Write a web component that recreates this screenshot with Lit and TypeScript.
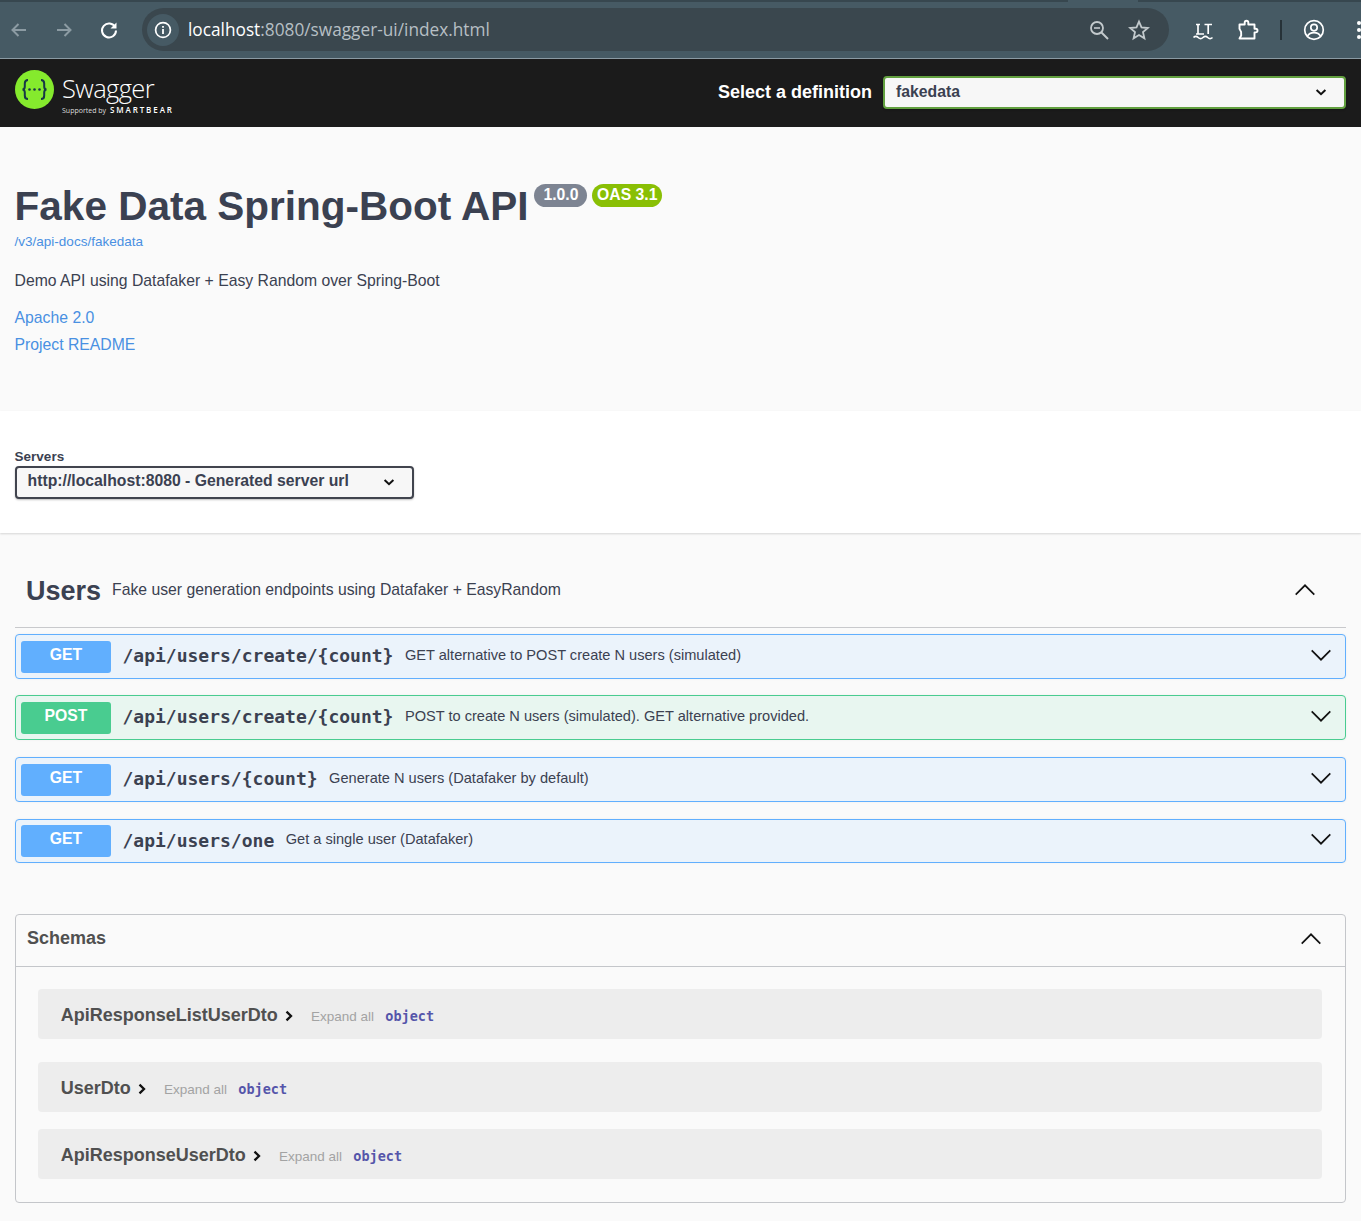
import { LitElement, html, css, svg } from 'lit';
import { customElement } from 'lit/decorators.js';

const operations = [
  { method: 'GET', path: '/api/users/create/{count}', summary: 'GET alternative to POST create N users (simulated)' },
  { method: 'POST', path: '/api/users/create/{count}', summary: 'POST to create N users (simulated). GET alternative provided.' },
  { method: 'GET', path: '/api/users/{count}', summary: 'Generate N users (Datafaker by default)' },
  { method: 'GET', path: '/api/users/one', summary: 'Get a single user (Datafaker)' },
];

const schemas = ['ApiResponseListUserDto', 'UserDto', 'ApiResponseUserDto'];

const chevron = (up = false) => html`
  <svg class="chevron" width="20" height="20" viewBox="0 0 20 20">
    <path d=${up ? 'M0.7 14.6L10 5.3l9.3 9.3' : 'M0.7 5.4L10 14.7l9.3-9.3'} fill="none" stroke="#111" stroke-width="1.7"></path>
  </svg>`;

const smallChevron = html`
  <svg width="14" height="14" viewBox="0 0 14 14">
    <path d="M2.6 5l4.4 4.2L11.4 5" fill="none" stroke="#111" stroke-width="2"></path>
  </svg>`;

const toolIcon = (body: unknown) => html`
  <span class="tool"><svg width="24" height="24" viewBox="0 0 24 24">${body}</svg></span>`;

@customElement('app-root')
export class AppRoot extends LitElement {
  static styles = css`
    :host {
      display: block;
      min-height: 1221px;
      background: #fafafa;
      font-family: 'Liberation Sans', Arial, sans-serif;
      color: #3b4151;
      overflow: hidden;
    }

    /* Browser chrome */
    .tabstrip {
      height: 2px;
      background: #37474f;
      padding-left: 1068px;
    }
    .tabstrip span {
      display: block;
      width: 70px;
      height: 2px;
      background: #465a64;
    }
    .toolbar {
      display: flex;
      align-items: center;
      height: 56px;
      box-sizing: content-box;
      padding-left: 1px;
      background: #465a64;
      border-bottom: 1px solid #8a9aa3;
      gap: 9px;
      overflow: hidden;
    }
    .tool {
      flex: 0 0 36px;
      display: flex;
      align-items: center;
      justify-content: center;
      height: 36px;
      margin-top: -1px;
    }
    .omnibox {
      flex: 0 0 1027px;
      height: 43px;
      margin: -1px 7px 0 6px;
      border-radius: 22px;
      background: #3a474e;
      display: flex;
      align-items: center;
      padding: 0 10px 0 5px;
      box-sizing: border-box;
    }
    .site-info {
      width: 32px;
      height: 32px;
      border-radius: 50%;
      background: #465a64;
      display: flex;
      align-items: center;
      justify-content: center;
    }
    .url {
      margin-left: 9px;
      flex: 1;
      font-family: 'Open Sans', 'Noto Sans', sans-serif;
      font-size: 17.25px;
      color: #b6bfc4;
    }
    .url b {
      font-weight: 400;
      color: #fff;
    }
    .omni-tool {
      width: 40px;
      display: flex;
      justify-content: center;
    }
    .separator {
      flex: 0 0 2px;
      height: 20px;
      background: #263238;
      margin: 0 5px;
    }

    /* Swagger top bar */
    .topbar {
      height: 68px;
      background: #1b1b1b;
      display: flex;
      align-items: center;
      padding: 0 15px;
    }
    .logo {
      display: flex;
      align-items: center;
      gap: 8px;
    }
    .logo svg {
      margin-top: -8px;
    }
    .wordmark {
      color: #fff;
      display: flex;
      flex-direction: column;
      margin-top: 3px;
    }
    .wordmark .name {
      font-family: 'Open Sans', sans-serif;
      font-weight: 300;
      font-size: 25.5px;
      line-height: 28px;
      letter-spacing: -0.6px;
    }
    .wordmark .by {
      font-family: 'Open Sans', sans-serif;
      font-size: 7px;
      line-height: 10px;
      margin-top: 3px;
      color: #ddd;
      white-space: nowrap;
    }
    .wordmark .by span {
      font-size: 8px;
      font-weight: 600;
      letter-spacing: 1.9px;
      color: #fff;
      margin-left: 2px;
    }
    .definition {
      margin-left: auto;
      margin-top: -2px;
      display: flex;
      align-items: center;
      gap: 11px;
      color: #fff;
      font-weight: 700;
      font-size: 18px;
    }
    .select {
      display: flex;
      align-items: center;
      justify-content: space-between;
      box-sizing: border-box;
      background: #f7f7f7;
      border-radius: 4px;
      font-weight: 700;
      color: #3b4151;
      font-size: 15.75px;
      box-shadow: 0 1px 2px 0 rgba(0, 0, 0, 0.25);
      padding: 0 16px 0 11px;
    }
    .select.def {
      width: 463px;
      height: 33px;
      border: 2px solid #62a03f;
    }
    .select.server {
      width: 399px;
      height: 33px;
      border: 2px solid #41444e;
      padding: 0 16px 0 11px;
    }
    .select span {
      margin-top: -3px;
    }
    .select.def span {
      margin-top: -1px;
    }
    .select svg {
      margin-top: -1px;
    }

    /* Info */
    .info {
      height: 284px;
      box-sizing: border-box;
      padding: 55px 15px 0 14.6px;
    }
    .title {
      display: flex;
      align-items: flex-start;
    }
    h1 {
      margin: 0;
      font-size: 40.5px;
      line-height: 49px;
      font-weight: 700;
      color: #3b4151;
    }
    .badge {
      margin-top: 2px;
      margin-left: 5px;
      height: 23px;
      border-radius: 12px;
      padding: 0 4.6px;
      box-sizing: border-box;
      background: #7d8492;
      color: #fff;
      font-weight: 700;
      font-size: 15.75px;
      line-height: 22px;
    }
    .badge.version {
      margin-left: 6px;
      padding: 0 9px;
    }
    .badge.oas {
      background: #89bf04;
    }
    a {
      color: #4990e2;
      text-decoration: none;
      display: block;
    }
    .spec-url {
      font-size: 13.5px;
      line-height: 16px;
      margin-top: 3px;
    }
    .desc {
      font-size: 15.75px;
      line-height: 20px;
      margin-top: 21px;
    }
    .links {
      margin-top: 13px;
      font-size: 15.75px;
      line-height: 27px;
    }

    /* Servers */
    .schemes {
      height: 122px;
      box-sizing: border-box;
      padding: 38px 15px 0 14.6px;
      background: #fff;
      box-shadow: 0 1px 2px 0 rgba(0, 0, 0, 0.15);
    }
    .schemes label {
      display: block;
      font-weight: 700;
      font-size: 13.5px;
      line-height: 16px;
      margin-bottom: 1px;
    }

    /* Operations */
    .section {
      padding: 0 15px;
    }
    .tag {
      display: flex;
      align-items: center;
      height: 95px;
      box-sizing: border-box;
      border-bottom: 1px solid #c8c9cc;
      padding: 22px 31px 0 11px;
    }
    .tag h3 {
      margin: 0;
      font-size: 27px;
      font-weight: 700;
      line-height: 32px;
    }
    .tag p {
      margin: -2px 0 0 11px;
      flex: 1;
      font-size: 15.75px;
    }
    .tag .chevron {
      margin-top: -3px;
    }
    .ops {
      margin-top: 6px;
    }
    .op {
      display: flex;
      align-items: center;
      height: 45px;
      box-sizing: border-box;
      margin-bottom: 17px;
      padding: 0 14px 0 5px;
      border: 1px solid #61affe;
      border-radius: 4px;
      background: #ebf3fb;
      box-shadow: 0 0 3px rgba(0, 0, 0, 0.05);
    }
    .op:first-child {
      margin-bottom: 16px;
    }
    .op:last-child {
      height: 44px;
      margin-bottom: 0;
    }
    .op.post {
      border-color: #49cc90;
      background: #e8f6f0;
    }
    .op .chevron {
      margin-top: -4px;
    }
    .method {
      flex: 0 0 90px;
      height: 32px;
      border-radius: 3px;
      background: #61affe;
      color: #fff;
      font-weight: 700;
      font-size: 15.75px;
      line-height: 28px;
      text-align: center;
    }
    .post .method {
      background: #49cc90;
    }
    .path {
      margin: -2px 0 0 11.5px;
      font-family: 'DejaVu Sans Mono', monospace;
      font-weight: 700;
      font-size: 18px;
    }
    .summary {
      margin: -4px 0 0 11.5px;
      flex: 1;
      font-size: 14.6px;
    }

    /* Schemas */
    .models {
      margin: 51px 15px 0;
      height: 289px;
      box-sizing: border-box;
      border: 1px solid #c4c6ca;
      border-radius: 4px;
    }
    .models header {
      height: 52px;
      box-sizing: border-box;
      display: flex;
      align-items: center;
      justify-content: space-between;
      padding: 0 24px 4px 11px;
      border-bottom: 1px solid #c4c6ca;
      font-size: 18px;
      font-weight: 700;
      color: #505050;
    }
    .model-list {
      padding: 22px 23px 0 22px;
    }
    .model {
      display: flex;
      align-items: center;
      height: 50px;
      box-sizing: border-box;
      padding: 4px 0 0 22.7px;
      margin-bottom: 17px;
      border-radius: 4px;
      background: #ededed;
    }
    .model:first-child {
      margin-bottom: 23px;
    }
    .model .name {
      font-size: 18px;
      font-weight: 700;
      color: #505050;
      margin-top: -2px;
    }
    .model svg {
      margin-left: 4px;
    }
    .expand {
      margin-left: 15.2px;
      font-size: 13.5px;
      color: #a3a3a3;
    }
    .type {
      margin: -1px 0 0 11.4px;
      font-family: 'DejaVu Sans Mono', monospace;
      font-weight: 700;
      font-size: 13.5px;
      color: #5555aa;
    }
  `;

  render() {
    return html`
      <div class="tabstrip"><span></span></div>
      <div class="toolbar">
        ${toolIcon(svg`<path d="M19 12H6M11.5 6L5.5 12l6 6" fill="none" stroke="#8c9ba3" stroke-width="2"/>`)}
        ${toolIcon(svg`<path d="M5 12h13M12.5 6l6 6-6 6" fill="none" stroke="#8c9ba3" stroke-width="2"/>`)}
        ${toolIcon(svg`<path d="M18.2 9.2A7 7 0 1 0 19 12.5" fill="none" stroke="#fff" stroke-width="2"/><path d="M19.5 4.5v6h-6z" fill="#fff"/>`)}
        <div class="omnibox">
          <span class="site-info">
            <svg width="20" height="20" viewBox="0 0 20 20">
              <circle cx="10" cy="10" r="7.4" fill="none" stroke="#fff" stroke-width="1.7"></circle>
              <path d="M10 9v5M10 6v1.7" stroke="#fff" stroke-width="1.8"></path>
            </svg>
          </span>
          <span class="url"><b>localhost</b>:8080/swagger-ui/index.html</span>
          <span class="omni-tool">
            <svg width="24" height="24" viewBox="0 0 24 24">
              <circle cx="10" cy="10" r="6" fill="none" stroke="#c3cacd" stroke-width="1.8"></circle>
              <path d="M14.5 14.5L21 21" stroke="#c3cacd" stroke-width="2"></path>
              <path d="M7 10h6" stroke="#c3cacd" stroke-width="1.6"></path>
            </svg>
          </span>
          <span class="omni-tool">
            <svg width="24" height="24" viewBox="0 0 24 24">
              <path d="M12 3.6l2.5 5.8 6.3.6-4.8 4.1 1.4 6.2-5.4-3.3-5.4 3.3 1.4-6.2L3.2 10l6.3-.6z" fill="none" stroke="#c3cacd" stroke-width="1.8"></path>
            </svg>
          </span>
        </div>
        ${toolIcon(svg`
          <path d="M5 6.5h4M7 6.5V16M5 16h8M13.5 6.5H21M17.2 6.5V16" fill="none" stroke="#fff" stroke-width="1.7"/>
          <path d="M2.5 19.5c1.6-1.6 3.1-1.6 4.7 0s3.1 1.6 4.8 0 3.1-1.6 4.7 0 3.1 1.6 4.8 0" fill="none" stroke="#fff" stroke-width="1.7"/>`)}
        ${toolIcon(svg`<path d="M3.5 6.5h5.2V4.6a1.8 1.8 0 0 1 3.6 0v1.9h6.2v4.3h1.2a1.8 1.8 0 0 1 0 3.6h-1.2v6.1H3.5l1.7-3-.1-3.6-1.6-3z" fill="none" stroke="#fff" stroke-width="1.9" stroke-linejoin="round"/>`)}
        <span class="separator"></span>
        ${toolIcon(svg`
          <circle cx="12" cy="12" r="9.3" fill="none" stroke="#fff" stroke-width="1.7"/>
          <circle cx="12" cy="9.6" r="3.2" fill="none" stroke="#fff" stroke-width="1.7"/>
          <path d="M5.5 18.2c1.5-3 3.8-3.6 6.5-3.6s5 .6 6.5 3.6" fill="none" stroke="#fff" stroke-width="1.7"/>`)}
        ${toolIcon(svg`<circle cx="12" cy="5" r="2" fill="#fff"/><circle cx="12" cy="12" r="2" fill="#fff"/><circle cx="12" cy="19" r="2" fill="#fff"/>`)}
      </div>

      <div class="topbar">
        <div class="logo">
          <svg width="39" height="39" viewBox="0 0 39 39">
            <circle cx="19.5" cy="19.5" r="19.5" fill="#85ea2d"></circle>
            <path d="M13 10c-3 0-3.2 1.6-3.2 3.6v2.8c0 1.9-.8 3-2.3 3.1 1.5.1 2.3 1.2 2.3 3.1v2.8c0 2 .2 3.6 3.2 3.6M26 10c3 0 3.2 1.6 3.2 3.6v2.8c0 1.9.8 3 2.3 3.1-1.5.1-2.3 1.2-2.3 3.1v2.8c0 2-.2 3.6-3.2 3.6" fill="none" stroke="#173647" stroke-width="2"></path>
            <circle cx="14.5" cy="19.5" r="1.3" fill="#173647"></circle>
            <circle cx="19.5" cy="19.5" r="1.3" fill="#173647"></circle>
            <circle cx="24.5" cy="19.5" r="1.3" fill="#173647"></circle>
          </svg>
          <div class="wordmark">
            <span class="name">Swagger</span>
            <span class="by">Supported by <span>SMARTBEAR</span></span>
          </div>
        </div>
        <div class="definition">
          Select a definition
          <div class="select def"><span>fakedata</span>${smallChevron}</div>
        </div>
      </div>

      <div class="info">
        <div class="title">
          <h1>Fake Data Spring-Boot API</h1>
          <span class="badge version">1.0.0</span>
          <span class="badge oas">OAS 3.1</span>
        </div>
        <a class="spec-url">/v3/api-docs/fakedata</a>
        <div class="desc">Demo API using Datafaker + Easy Random over Spring-Boot</div>
        <div class="links">
          <a>Apache 2.0</a>
          <a>Project README</a>
        </div>
      </div>

      <div class="schemes">
        <label>Servers</label>
        <div class="select server"><span>http://localhost:8080 - Generated server url</span>${smallChevron}</div>
      </div>

      <div class="section">
        <div class="tag">
          <h3>Users</h3>
          <p>Fake user generation endpoints using Datafaker + EasyRandom</p>
          ${chevron(true)}
        </div>
        <div class="ops">
          ${operations.map(
            (op) => html`
              <div class="op ${op.method.toLowerCase()}">
                <span class="method">${op.method}</span>
                <span class="path">${op.path}</span>
                <span class="summary">${op.summary}</span>
                ${chevron()}
              </div>
            `,
          )}
        </div>
      </div>

      <div class="models">
        <header>Schemas ${chevron(true)}</header>
        <div class="model-list">
          ${schemas.map(
            (name) => html`
              <div class="model">
                <span class="name">${name}</span>
                <svg width="14" height="14" viewBox="0 0 14 14">
                  <path d="M4.5 2.6L9 7l-4.5 4.4" fill="none" stroke="#111" stroke-width="2.3"></path>
                </svg>
                <span class="expand">Expand all</span>
                <span class="type">object</span>
              </div>
            `,
          )}
        </div>
      </div>
    `;
  }
}
